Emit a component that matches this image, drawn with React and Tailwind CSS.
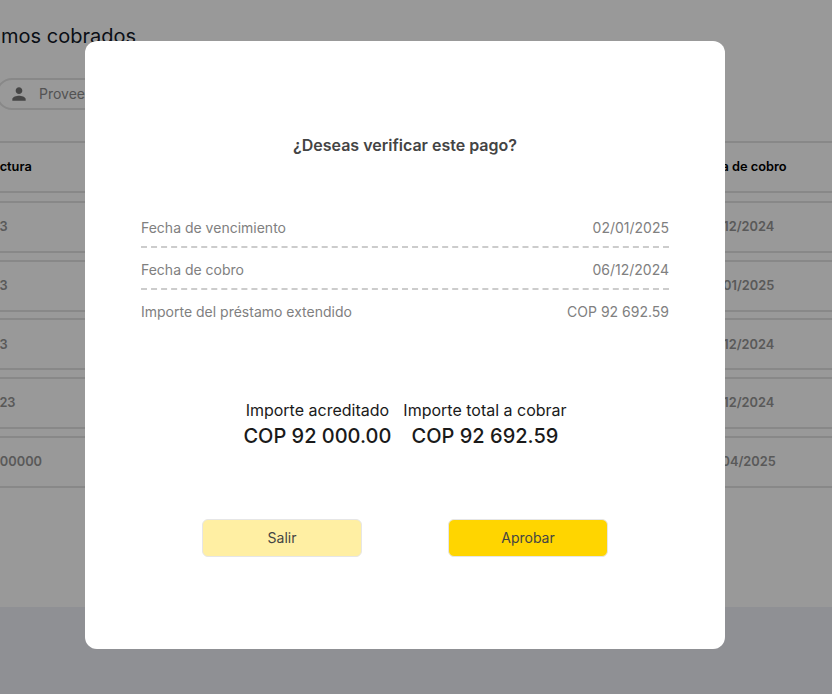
import React from 'react';

const rows = [
    { factura: '123', fecha: '06/12/2024' },
    { factura: '123', fecha: '02/01/2025' },
    { factura: '123', fecha: '06/12/2024' },
    { factura: '1223', fecha: '06/12/2024' },
    { factura: '1000000', fecha: '02/04/2025' },
];

const detalle = [
    { label: 'Fecha de vencimiento', value: '02/01/2025' },
    { label: 'Fecha de cobro', value: '06/12/2024' },
    { label: 'Importe del préstamo extendido', value: 'COP 92 692.59' },
];

const IconUser = () => (
    <svg viewBox="0 0 24 24" className="w-5 h-5 fill-[#757575] shrink-0">
        <path d="M12 12c2.21 0 4-1.79 4-4s-1.79-4-4-4-4 1.79-4 4 1.79 4 4 4zm0 2c-2.67 0-8 1.34-8 4v2h16v-2c0-2.66-5.33-4-8-4z" />
    </svg>
);

const Fila = ({ izquierda, derecha, header }) => (
    <div className={`flex items-center justify-between h-[52px] border-y-2 border-[#e3e3e3] text-[12.8px] font-semibold ${header ? 'text-black mb-[1px]' : 'text-[#959595]'}`}>
        <span className={header ? '-ml-[15px]' : '-ml-[14px]'}>{izquierda}</span>
        <span className={`w-[110px] text-center ${header ? 'mr-[38px]' : 'mr-[39px]'}`}>{derecha}</span>
    </div>
);

const App = () => {
    return (
        <div className="relative h-[694px] w-full overflow-hidden bg-[#eff0f7] font-['Inter',sans-serif]">
            <div className="h-[607px] bg-white overflow-hidden">
                <h1 className="-ml-[59px] pt-[22px] text-xl font-normal leading-7 text-[#111827]">Préstamos cobrados</h1>
                <div className="-ml-1 mt-[28px] flex items-center gap-[10px] w-[260px] h-8 pl-[11px] border-2 border-[#e3e3e3] rounded-2xl text-sm text-[#8a8a8a]">
                    <IconUser />
                    <span>Proveedor</span>
                </div>
                <div className="mt-[31px] flex flex-col gap-[6.75px]">
                    <Fila header izquierda="Factura" derecha="Fecha de cobro" />
                    {rows.map((r, i) => (
                        <Fila key={i} izquierda={r.factura} derecha={r.fecha} />
                    ))}
                </div>
            </div>

            <div className="fixed inset-0 bg-black/40">
                <div className="absolute left-[85px] top-[41px] w-[640px] h-[608px] bg-white rounded-xl px-14 pt-[94px]">
                    <h2 className="text-center text-base font-semibold leading-5 text-[#444444]">¿Deseas verificar este pago?</h2>

                    <div className="mt-[51px]">
                        {detalle.map((d, i) => (
                            <div key={d.label} className={`flex justify-between items-center h-[42px] text-sm text-[#808080] ${i < 2 ? 'pt-[3px] border-b-2 border-dashed border-[#cccccc]' : 'pt-[1px]'}`}>
                                <span>{d.label}</span>
                                <span>{d.value}</span>
                            </div>
                        ))}
                    </div>

                    <div className="mt-[66px] flex justify-center gap-3 text-[#1a1a1a]">
                        <div className="flex flex-col items-center">
                            <span className="text-base leading-6">Importe acreditado</span>
                            <span className="text-xl font-medium leading-7">COP 92 000.00</span>
                        </div>
                        <div className="flex flex-col items-center">
                            <span className="text-base leading-6">Importe total a cobrar</span>
                            <span className="text-xl font-medium leading-7">COP 92 692.59</span>
                        </div>
                    </div>

                    <div className="mt-[69px] flex justify-center gap-[86px]">
                        <button className="w-40 h-[38px] rounded-md border border-[#e6e6e6] bg-[#ffefa3] text-sm text-[#444444]">Salir</button>
                        <button className="w-40 h-[38px] rounded-md border border-[#e6e6e6] bg-[#ffd500] text-sm text-[#444444]">Aprobar</button>
                    </div>
                </div>
            </div>
        </div>
    );
};

export default App;
